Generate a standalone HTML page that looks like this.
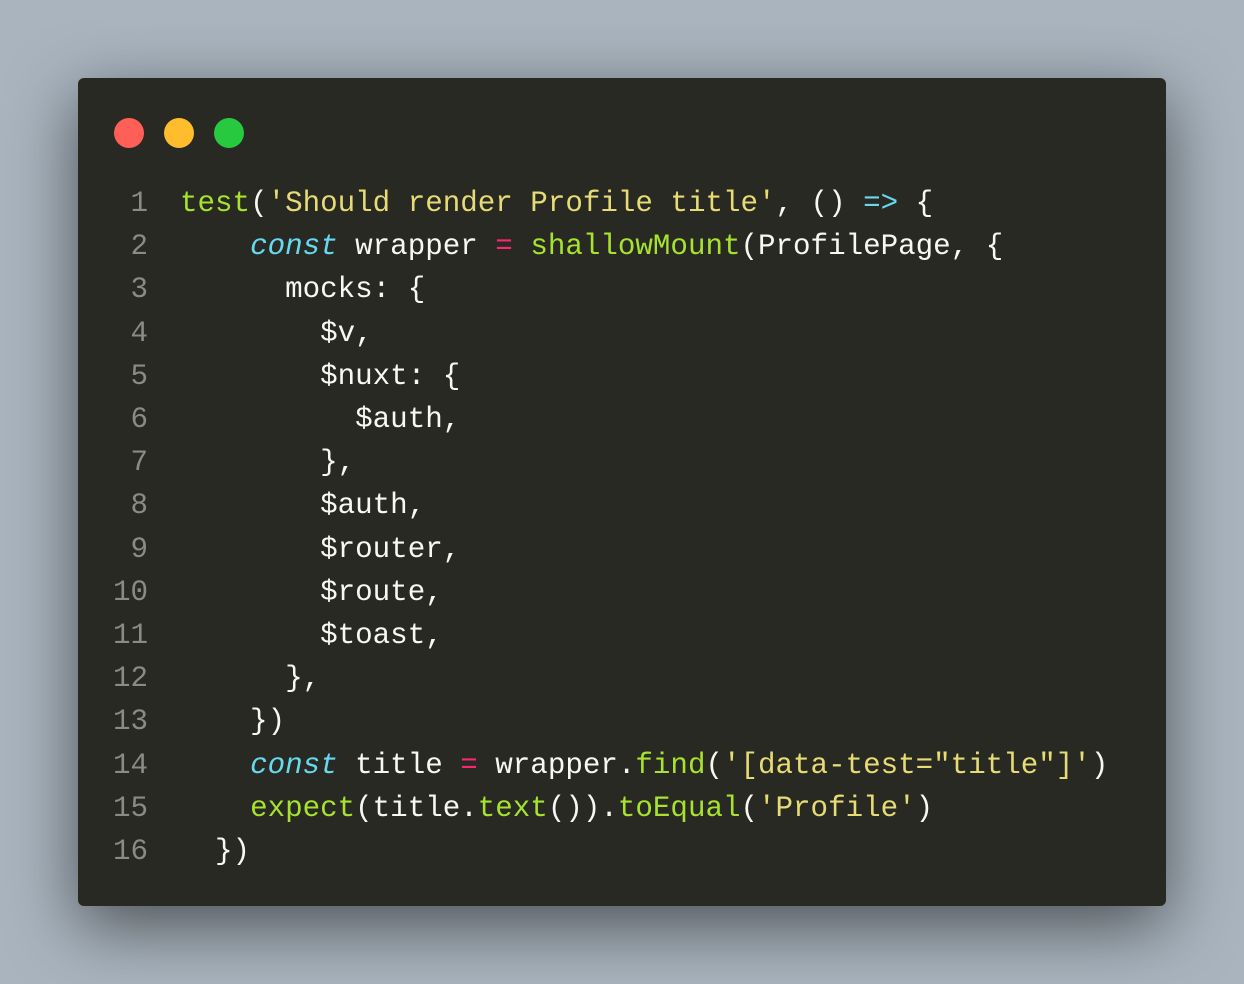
<!DOCTYPE html>
<html><head><meta charset="utf-8"><style>
html,body{margin:0;padding:0;}
body{width:1244px;height:984px;background:#a9b4be;position:relative;overflow:hidden;}
.win{position:absolute;left:78px;top:78px;width:1088px;height:828px;background:#282923;border-radius:6px;box-shadow:0 20px 68px rgba(0,0,0,0.55);}
.dot{position:absolute;top:40px;width:30px;height:30px;border-radius:50%;}
pre{position:absolute;margin:0;top:104px;font-family:"Liberation Mono",monospace;font-size:29.2px;line-height:43.2px;}
.ln{left:20px;width:50px;text-align:right;color:#8a8a86;}
.code{left:102px;color:#f8f8f2;}
.g{color:#a6e22e}.s{color:#e6db74}.k{color:#66d9ef;font-style:italic}.c{color:#66d9ef}.p{color:#f92672}
</style></head><body>
<div class="win">
<div class="dot" style="left:36px;background:#ff5f56"></div>
<div class="dot" style="left:86px;background:#ffbd2e"></div>
<div class="dot" style="left:136px;background:#27c93f"></div>
<pre class="ln">1
2
3
4
5
6
7
8
9
10
11
12
13
14
15
16</pre>
<pre class="code"><span class="g">test</span>(<span class="s">'Should render Profile title'</span>, () <span class="c">=&gt;</span> {
    <span class="k">const</span> wrapper <span class="p">=</span> <span class="g">shallowMount</span>(ProfilePage, {
      mocks: {
        $v,
        $nuxt: {
          $auth,
        },
        $auth,
        $router,
        $route,
        $toast,
      },
    })
    <span class="k">const</span> title <span class="p">=</span> wrapper.<span class="g">find</span>(<span class="s">'[data-test="title"]'</span>)
    <span class="g">expect</span>(title.<span class="g">text</span>()).<span class="g">toEqual</span>(<span class="s">'Profile'</span>)
  })</pre>
</div>
</body></html>
